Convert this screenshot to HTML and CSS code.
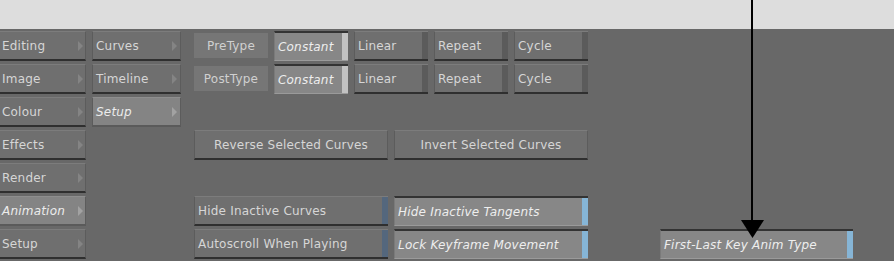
FILE: index.html
```html
<!DOCTYPE html>
<html lang="en">
<head>
    <meta charset="UTF-8">
    <title>Animation Setup</title>
    <link rel="stylesheet" href="styles.css">
</head>
<body>

    <div class="topband"></div>

    <div class="panel">
        <div class="col menu">
            <div class="btn">Editing<span class="tri"></span></div>
            <div class="btn">Image<span class="tri"></span></div>
            <div class="btn">Colour<span class="tri"></span></div>
            <div class="btn">Effects<span class="tri"></span></div>
            <div class="btn">Render<span class="tri"></span></div>
            <div class="btn sel">Animation<span class="tri"></span></div>
            <div class="btn">Setup<span class="tri"></span></div>
        </div>

        <div class="col submenu">
            <div class="btn">Curves<span class="tri"></span></div>
            <div class="btn">Timeline<span class="tri"></span></div>
            <div class="btn sel">Setup<span class="tri"></span></div>
        </div>

        <div class="col setup">
            <div class="five">
                <div class="label">PreType</div>
                <div class="btn on strip-light">Constant</div>
                <div class="btn strip-dark">Linear</div>
                <div class="btn strip-dark">Repeat</div>
                <div class="btn strip-dark">Cycle</div>
            </div>
            <div class="five">
                <div class="label">PostType</div>
                <div class="btn on strip-light">Constant</div>
                <div class="btn strip-dark">Linear</div>
                <div class="btn strip-dark">Repeat</div>
                <div class="btn strip-dark">Cycle</div>
            </div>
            <div class="gap"></div>
            <div class="two">
                <div class="btn center">Reverse Selected Curves</div>
                <div class="btn center">Invert Selected Curves</div>
            </div>
            <div class="gap"></div>
            <div class="two">
                <div class="btn strip-blue">Hide Inactive Curves</div>
                <div class="btn on strip-sky">Hide Inactive Tangents</div>
            </div>
            <div class="two">
                <div class="btn strip-blue">Autoscroll When Playing</div>
                <div class="btn on strip-sky">Lock Keyframe Movement</div>
            </div>
        </div>

        <div class="col extra">
            <div class="btn on strip-sky">First-Last Key Anim Type</div>
        </div>
    </div>

    <svg class="callout" width="894" height="261" viewBox="0 0 894 261">
        <line x1="752" y1="0" x2="752" y2="224" stroke="#000" stroke-width="2"/>
        <polygon points="741,220 764,220 752.5,238" fill="#000"/>
    </svg>

</body>
</html>
```

FILE: styles.css
```css
body {
    margin: 0;
    width: 894px;
    height: 261px;
    overflow: hidden;
    background-color: #686868;
    font-family: "DejaVu Sans", sans-serif;
    font-size: 12px;
    letter-spacing: 0.2px;
    color: #d6d6d6;
    position: relative;
}
.topband {
    height: 29px;
    background-color: #dddddd;
}
.panel {
    display: flex;
    align-items: flex-start;
    padding-top: 2px;
}
.col {
    display: grid;
    grid-auto-rows: 30px;
    row-gap: 3px;
}
.menu {
    width: 86px;
}
.submenu {
    width: 89px;
    margin-left: 6px;
}
.setup {
    width: 394px;
    margin-left: 13px;
}
.extra {
    width: 193px;
    margin-left: 72px;
    padding-top: 198px;
}
.five {
    display: grid;
    grid-template-columns: repeat(5, 1fr);
    column-gap: 6px;
}
.two {
    display: grid;
    grid-template-columns: 1fr 1fr;
    column-gap: 6px;
}

.btn {
    position: relative;
    box-sizing: border-box;
    display: flex;
    align-items: center;
    padding: 1px 0 0 3px;
    background-color: #6f6f6f;
    border-top: 1px solid #7c7c7c;
    border-left: 1px solid #5c5c5c;
    border-right: 1px solid #5c5c5c;
    border-bottom: 2px solid #2f2f2f;
    white-space: nowrap;
}
.menu .btn {
    border-left: none;
    padding-left: 2px;
}
.btn.center {
    justify-content: center;
    padding-left: 0;
}
.btn.sel {
    background-color: #848484;
    border-top-color: #8e8e8e;
    border-bottom-color: #5a5a5a;
    font-style: italic;
    color: #ececec;
}
.btn.on {
    background-color: #878787;
    border-top: 2px solid #333333;
    border-bottom: 1px solid #9a9a9a;
    border-left-color: #7a7a7a;
    border-right: none;
    font-style: italic;
    color: #eeeeee;
}

.tri {
    position: absolute;
    right: 2px;
    top: 50%;
    margin-top: -5px;
    width: 0;
    height: 0;
    border-top: 5px solid transparent;
    border-bottom: 5px solid transparent;
    border-left: 5px solid #848484;
}
.submenu .tri {
    right: 3px;
}
.sel .tri {
    border-left-color: #a2a2a2;
}

.strip-light, .strip-dark, .strip-blue, .strip-sky {
    border-right: none;
}
.strip-light::after, .strip-dark::after, .strip-blue::after, .strip-sky::after {
    content: "";
    position: absolute;
    right: 0;
    top: 0;
    bottom: 0;
    width: 6px;
}
.strip-light::after {
    background-color: #c2c2c2;
}
.strip-dark::after {
    background-color: #5b5b5b;
}
.strip-blue::after {
    background-color: #54677d;
}
.strip-sky::after {
    background-color: #86b5d6;
}

.label {
    margin: 2px 0 3px;
    padding-top: 1px;
    display: flex;
    align-items: center;
    justify-content: center;
    background-color: #767676;
    color: #d0d0d0;
}

.callout {
    position: absolute;
    left: 0;
    top: 0;
}
```
